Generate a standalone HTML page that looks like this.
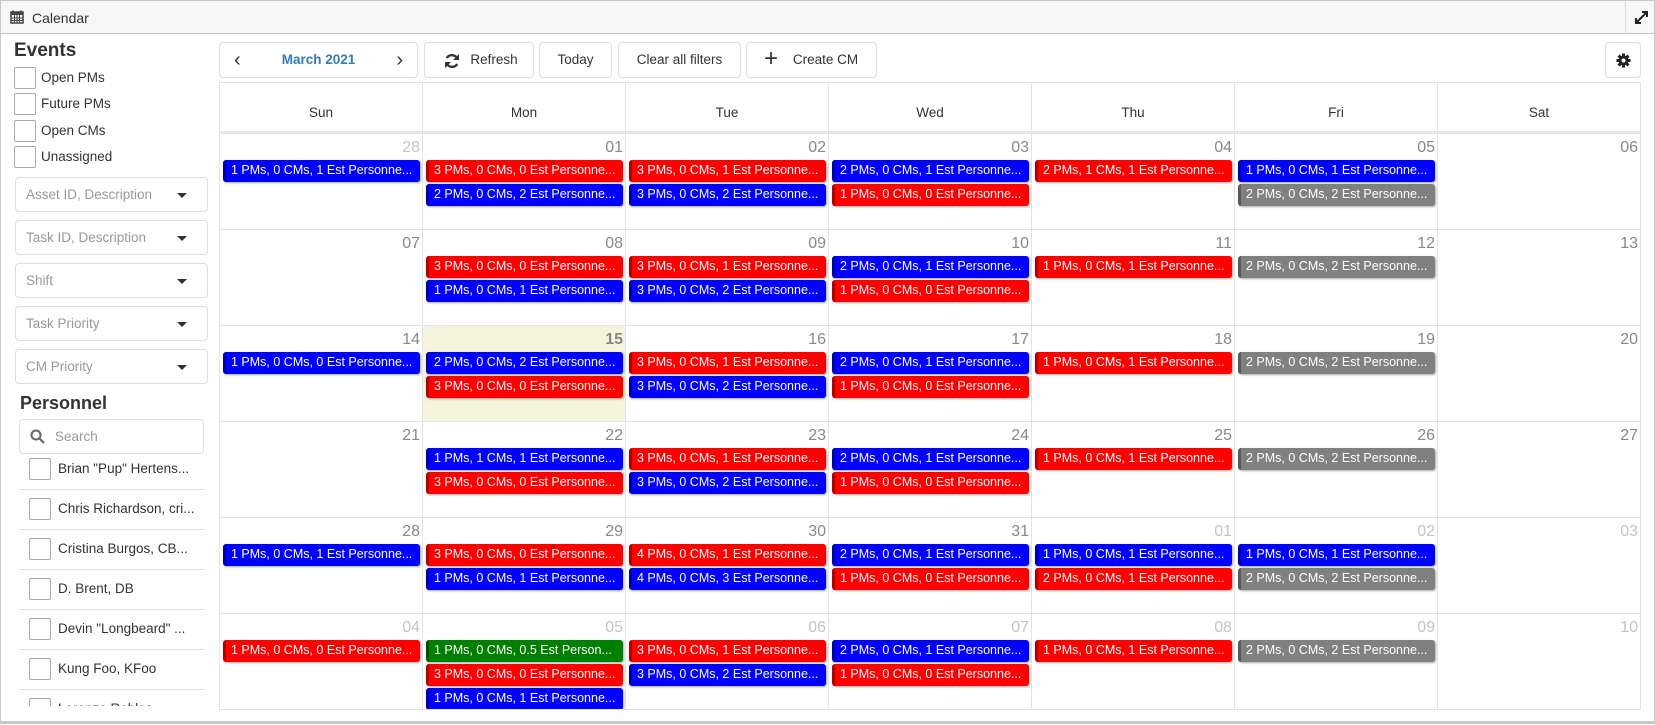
<!DOCTYPE html>
<html><head><meta charset="utf-8"><style>
*{box-sizing:border-box;margin:0;padding:0}
body{width:1655px;height:725px;background:#fff;font-family:"Liberation Sans",sans-serif;color:#333;position:relative;overflow:hidden}
.frame{position:absolute;left:0;top:0;width:1655px;height:724px;border:1px solid #c8c8c8;border-bottom:3px solid #c8c8c8}
.top{position:absolute;left:0;top:0;width:1655px;height:34px;background:#f7f7f7;border:1px solid #c8c8c8}
.top .t{position:absolute;left:31px;top:9px;font-size:14px;color:#333}
.exp{position:absolute;left:1624px;top:0;width:30px;height:33px;border-left:1px solid #ddd}
.abs{position:absolute}
.cb{position:absolute;width:22px;height:22px;border:1px solid #aaa;border-radius:2px;background:#fff}
.lbl{position:absolute;font-size:13.5px;color:#333}
.dd{position:absolute;left:15px;width:193px;height:35px;border:1px solid #ddd;border-radius:4px;font-size:13.5px;color:#999;padding:9px 0 0 10px}
.dd:after{content:"";position:absolute;right:20px;top:15px;border-left:5px solid transparent;border-right:5px solid transparent;border-top:5px solid #333}
.btn{position:absolute;top:42px;height:36px;border:1px solid #ddd;border-radius:4px;font-size:13.5px;color:#333;line-height:34px;text-align:center;background:#fff}
.grid{position:absolute;left:219px;top:82px;width:1422px;height:628px;border:1px solid #e3e3e3;border-top:1px solid #e3e3e3}
.hd{position:absolute;top:0;height:51px;width:203px;text-align:center;line-height:40px;padding-top:10px;font-size:13.5px;color:#333;border-left:1px solid #e3e3e3;border-bottom:3px solid #e8e8e8}
.c{position:absolute;width:203px;height:96px;border-left:1px solid #e3e3e3;border-top:1px solid #e3e3e3}
.n{position:absolute;right:2px;top:5px;font-size:16px;color:#888}
.o .n{color:#c4c4c4}
.today{background:#f5f4dd}.today .n{font-weight:bold;color:#888}
.e{position:absolute;left:3px;width:197px;height:22px;line-height:21px;font-size:12.5px;color:#fff;padding-left:5px;border-radius:3px;white-space:nowrap;overflow:hidden;box-shadow:1px 1px 2px rgba(0,0,0,.35);border-left:3px solid}
.e1{top:26px}.e2{top:50px}.e3{top:74px}
.b{background:#0000ff;border-color:#0000a8}
.r{background:#ff0000;border-color:#b00000}
.g{background:#808080;border-color:#5a5a5a}
.gr{background:#008000;border-color:#005000}
.pi{position:absolute;left:19px;width:185px;height:40px;border-bottom:1px solid #ddd}
.pi .cb{left:10px;top:8px}
.pi span{position:absolute;left:39px;top:11px;font-size:13.5px;color:#333;white-space:nowrap}
</style></head><body>
<div class="frame"></div>
<div class="top"><svg class="abs" style="left:9px;top:9px" width="14" height="14" viewBox="0 0 14 14"><rect x="1" y="2" width="12" height="11" fill="none" stroke="#444" stroke-width="1.5"/><rect x="1" y="2" width="12" height="3" fill="#444"/><path d="M3 0v3M11 0v3M1 8h12M1 10.5h12M4.5 5v8M7 5v8M9.5 5v8" stroke="#444" stroke-width="1"/></svg><span class="t">Calendar</span>
<div class="exp"><svg class="abs" style="left:9px;top:10px" width="13" height="13" viewBox="0 0 13 13"><path d="M1 12L12 1M7 1h5v5M1 7v5h5" stroke="#222" stroke-width="2" fill="none"/></svg></div></div>

<div class="abs" style="left:14px;top:40px;font-size:19px;font-weight:bold;color:#333">Events</div>
<div class="cb" style="left:14px;top:67px"></div><div class="lbl" style="left:41px;top:70px">Open PMs</div>
<div class="cb" style="left:14px;top:93px"></div><div class="lbl" style="left:41px;top:96px">Future PMs</div>
<div class="cb" style="left:14px;top:120px"></div><div class="lbl" style="left:41px;top:123px">Open CMs</div>
<div class="cb" style="left:14px;top:146px"></div><div class="lbl" style="left:41px;top:149px">Unassigned</div>
<div class="dd" style="top:177px">Asset ID, Description</div>
<div class="dd" style="top:220px">Task ID, Description</div>
<div class="dd" style="top:263px">Shift</div>
<div class="dd" style="top:306px">Task Priority</div>
<div class="dd" style="top:349px">CM Priority</div>
<div class="abs" style="left:20px;top:393px;font-size:18px;font-weight:bold;color:#333">Personnel</div>
<div class="abs" style="left:19px;top:419px;width:185px;height:35px;border:1px solid #ddd;border-radius:4px"><svg class="abs" style="left:10px;top:9px" width="15" height="15" viewBox="0 0 15 15"><circle cx="6" cy="6" r="4.5" stroke="#666" stroke-width="2" fill="none"/><path d="M9.5 9.5L14 14" stroke="#666" stroke-width="2.2"/></svg><span class="abs" style="left:35px;top:9px;font-size:13.5px;color:#999">Search</span></div>
<div class="abs" style="left:0;top:456px;width:215px;height:250px;overflow:hidden">
<div class="pi" style="top:-6px"><div class="cb"></div><span>Brian "Pup" Hertens...</span></div>
<div class="pi" style="top:34px"><div class="cb"></div><span>Chris Richardson, cri...</span></div>
<div class="pi" style="top:74px"><div class="cb"></div><span>Cristina Burgos, CB...</span></div>
<div class="pi" style="top:114px"><div class="cb"></div><span>D. Brent, DB</span></div>
<div class="pi" style="top:154px"><div class="cb"></div><span>Devin "Longbeard" ...</span></div>
<div class="pi" style="top:194px"><div class="cb"></div><span>Kung Foo, KFoo</span></div>
<div class="pi" style="top:234px"><div class="cb"></div><span>Lorenzo Robles, ...</span></div>
</div>

<div class="btn" style="left:219px;width:199px"><span class="abs" style="left:14px;top:0;font-size:20px">&#8249;</span><span style="color:#337ab7;font-weight:bold">March 2021</span><span class="abs" style="right:14px;top:0;font-size:20px">&#8250;</span></div>
<div class="btn" style="left:424px;width:110px;padding-left:30px"><svg class="abs" style="left:19px;top:10px" width="16" height="16" viewBox="0 0 16 16"><path d="M13.5 6A6 6 0 0 0 2.8 5M2.5 10a6 6 0 0 0 10.7 1" stroke="#333" stroke-width="2.4" fill="none"/><path d="M15 1v6H9zM1 15V9h6z" fill="#333"/></svg>Refresh</div>
<div class="btn" style="left:539px;width:73px">Today</div>
<div class="btn" style="left:618px;width:123px">Clear all filters</div>
<div class="btn" style="left:746px;width:131px;padding-left:28px"><span class="abs" style="left:17px;top:-1px;font-size:24px;font-weight:300">+</span>Create CM</div>
<div class="btn" style="left:1605px;width:36px"><svg class="abs" style="left:10px;top:10px" width="15" height="15" viewBox="0 0 16 16"><circle cx="8" cy="8" r="5.2" fill="#222"/><path d="M8 0.5v15M0.5 8h15M2.7 2.7l10.6 10.6M13.3 2.7L2.7 13.3" stroke="#222" stroke-width="3.2"/><circle cx="8" cy="8" r="2.2" fill="#fff"/></svg></div>

<div class="grid">
<div class="hd" style="left:-1px">Sun</div><div class="hd" style="left:202px">Mon</div><div class="hd" style="left:405px">Tue</div><div class="hd" style="left:608px">Wed</div><div class="hd" style="left:811px">Thu</div><div class="hd" style="left:1014px">Fri</div><div class="hd" style="left:1217px">Sat</div>

<div class="c o" style="left:-1px;top:50px"><span class="n">28</span><div class="e b e1">1 PMs, 0 CMs, 1 Est Personne...</div></div>
<div class="c" style="left:202px;top:50px"><span class="n">01</span><div class="e r e1">3 PMs, 0 CMs, 0 Est Personne...</div><div class="e b e2">2 PMs, 0 CMs, 2 Est Personne...</div></div>
<div class="c" style="left:405px;top:50px"><span class="n">02</span><div class="e r e1">3 PMs, 0 CMs, 1 Est Personne...</div><div class="e b e2">3 PMs, 0 CMs, 2 Est Personne...</div></div>
<div class="c" style="left:608px;top:50px"><span class="n">03</span><div class="e b e1">2 PMs, 0 CMs, 1 Est Personne...</div><div class="e r e2">1 PMs, 0 CMs, 0 Est Personne...</div></div>
<div class="c" style="left:811px;top:50px"><span class="n">04</span><div class="e r e1">2 PMs, 1 CMs, 1 Est Personne...</div></div>
<div class="c" style="left:1014px;top:50px"><span class="n">05</span><div class="e b e1">1 PMs, 0 CMs, 1 Est Personne...</div><div class="e g e2">2 PMs, 0 CMs, 2 Est Personne...</div></div>
<div class="c" style="left:1217px;top:50px"><span class="n">06</span></div>

<div class="c" style="left:-1px;top:146px"><span class="n">07</span></div>
<div class="c" style="left:202px;top:146px"><span class="n">08</span><div class="e r e1">3 PMs, 0 CMs, 0 Est Personne...</div><div class="e b e2">1 PMs, 0 CMs, 1 Est Personne...</div></div>
<div class="c" style="left:405px;top:146px"><span class="n">09</span><div class="e r e1">3 PMs, 0 CMs, 1 Est Personne...</div><div class="e b e2">3 PMs, 0 CMs, 2 Est Personne...</div></div>
<div class="c" style="left:608px;top:146px"><span class="n">10</span><div class="e b e1">2 PMs, 0 CMs, 1 Est Personne...</div><div class="e r e2">1 PMs, 0 CMs, 0 Est Personne...</div></div>
<div class="c" style="left:811px;top:146px"><span class="n">11</span><div class="e r e1">1 PMs, 0 CMs, 1 Est Personne...</div></div>
<div class="c" style="left:1014px;top:146px"><span class="n">12</span><div class="e g e1">2 PMs, 0 CMs, 2 Est Personne...</div></div>
<div class="c" style="left:1217px;top:146px"><span class="n">13</span></div>

<div class="c" style="left:-1px;top:242px"><span class="n">14</span><div class="e b e1">1 PMs, 0 CMs, 0 Est Personne...</div></div>
<div class="c today" style="left:202px;top:242px"><span class="n">15</span><div class="e b e1">2 PMs, 0 CMs, 2 Est Personne...</div><div class="e r e2">3 PMs, 0 CMs, 0 Est Personne...</div></div>
<div class="c" style="left:405px;top:242px"><span class="n">16</span><div class="e r e1">3 PMs, 0 CMs, 1 Est Personne...</div><div class="e b e2">3 PMs, 0 CMs, 2 Est Personne...</div></div>
<div class="c" style="left:608px;top:242px"><span class="n">17</span><div class="e b e1">2 PMs, 0 CMs, 1 Est Personne...</div><div class="e r e2">1 PMs, 0 CMs, 0 Est Personne...</div></div>
<div class="c" style="left:811px;top:242px"><span class="n">18</span><div class="e r e1">1 PMs, 0 CMs, 1 Est Personne...</div></div>
<div class="c" style="left:1014px;top:242px"><span class="n">19</span><div class="e g e1">2 PMs, 0 CMs, 2 Est Personne...</div></div>
<div class="c" style="left:1217px;top:242px"><span class="n">20</span></div>

<div class="c" style="left:-1px;top:338px"><span class="n">21</span></div>
<div class="c" style="left:202px;top:338px"><span class="n">22</span><div class="e b e1">1 PMs, 1 CMs, 1 Est Personne...</div><div class="e r e2">3 PMs, 0 CMs, 0 Est Personne...</div></div>
<div class="c" style="left:405px;top:338px"><span class="n">23</span><div class="e r e1">3 PMs, 0 CMs, 1 Est Personne...</div><div class="e b e2">3 PMs, 0 CMs, 2 Est Personne...</div></div>
<div class="c" style="left:608px;top:338px"><span class="n">24</span><div class="e b e1">2 PMs, 0 CMs, 1 Est Personne...</div><div class="e r e2">1 PMs, 0 CMs, 0 Est Personne...</div></div>
<div class="c" style="left:811px;top:338px"><span class="n">25</span><div class="e r e1">1 PMs, 0 CMs, 1 Est Personne...</div></div>
<div class="c" style="left:1014px;top:338px"><span class="n">26</span><div class="e g e1">2 PMs, 0 CMs, 2 Est Personne...</div></div>
<div class="c" style="left:1217px;top:338px"><span class="n">27</span></div>

<div class="c" style="left:-1px;top:434px"><span class="n">28</span><div class="e b e1">1 PMs, 0 CMs, 1 Est Personne...</div></div>
<div class="c" style="left:202px;top:434px"><span class="n">29</span><div class="e r e1">3 PMs, 0 CMs, 0 Est Personne...</div><div class="e b e2">1 PMs, 0 CMs, 1 Est Personne...</div></div>
<div class="c" style="left:405px;top:434px"><span class="n">30</span><div class="e r e1">4 PMs, 0 CMs, 1 Est Personne...</div><div class="e b e2">4 PMs, 0 CMs, 3 Est Personne...</div></div>
<div class="c" style="left:608px;top:434px"><span class="n">31</span><div class="e b e1">2 PMs, 0 CMs, 1 Est Personne...</div><div class="e r e2">1 PMs, 0 CMs, 0 Est Personne...</div></div>
<div class="c o" style="left:811px;top:434px"><span class="n">01</span><div class="e b e1">1 PMs, 0 CMs, 1 Est Personne...</div><div class="e r e2">2 PMs, 0 CMs, 1 Est Personne...</div></div>
<div class="c o" style="left:1014px;top:434px"><span class="n">02</span><div class="e b e1">1 PMs, 0 CMs, 1 Est Personne...</div><div class="e g e2">2 PMs, 0 CMs, 2 Est Personne...</div></div>
<div class="c o" style="left:1217px;top:434px"><span class="n">03</span></div>

<div class="c o" style="left:-1px;top:530px;overflow:hidden"><span class="n">04</span><div class="e r e1">1 PMs, 0 CMs, 0 Est Personne...</div></div>
<div class="c o" style="left:202px;top:530px;overflow:hidden"><span class="n">05</span><div class="e gr e1">1 PMs, 0 CMs, 0.5 Est Person...</div><div class="e r e2">3 PMs, 0 CMs, 0 Est Personne...</div><div class="e b e3">1 PMs, 0 CMs, 1 Est Personne...</div></div>
<div class="c o" style="left:405px;top:530px"><span class="n">06</span><div class="e r e1">3 PMs, 0 CMs, 1 Est Personne...</div><div class="e b e2">3 PMs, 0 CMs, 2 Est Personne...</div></div>
<div class="c o" style="left:608px;top:530px"><span class="n">07</span><div class="e b e1">2 PMs, 0 CMs, 1 Est Personne...</div><div class="e r e2">1 PMs, 0 CMs, 0 Est Personne...</div></div>
<div class="c o" style="left:811px;top:530px"><span class="n">08</span><div class="e r e1">1 PMs, 0 CMs, 1 Est Personne...</div></div>
<div class="c o" style="left:1014px;top:530px"><span class="n">09</span><div class="e g e1">2 PMs, 0 CMs, 2 Est Personne...</div></div>
<div class="c o" style="left:1217px;top:530px"><span class="n">10</span></div>
</div>
</body></html>
